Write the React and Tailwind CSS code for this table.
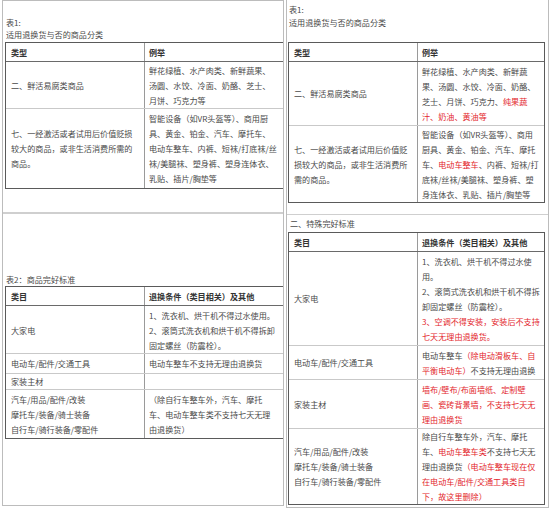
import React from "react";

const R = ({ children }) => <span className="text-[#e3262c]">{children}</span>;

function Lines({ lines }) {
  return (
    <>
      {lines.map((l, i) => (
        <div key={i} className="whitespace-nowrap">
          {l}
        </div>
      ))}
    </>
  );
}

function Row({ a, b, col1, head, first, afterHead, pad = "py-[1.5px]", aTop = false }) {
  const border = first ? "" : afterHead ? "border-t border-[#6a6a6a]" : "border-t border-[#c9c9c9]";
  const weight = head ? "font-bold text-[#333]" : "";
  return (
    <div className={`flex ${border}`}>
      <div
        className={`${col1} shrink-0 border-r border-[#9a9a9a] pl-[5px] ${pad} flex flex-col ${aTop ? "justify-start" : "justify-center"} overflow-hidden ${weight}`}
      >
        <Lines lines={a} />
      </div>
      <div className={`flex-1 pl-[4px] ${pad} overflow-hidden ${weight}`}>
        <Lines lines={b} />
      </div>
    </div>
  );
}

export default function App() {
  return (
    <div className="w-[549px] h-[508px] bg-white flex overflow-hidden text-[#4a4a4a] text-[8.1px] leading-[15px] font-['Noto_Sans_CJK_SC','Noto_Sans',sans-serif]">
      {/* LEFT PANEL */}
      <div className="ml-[2px] w-[282px] h-[506px] shrink-0 border border-[#bcbcbc] flex flex-col overflow-hidden">
        <div className="h-[213px] shrink-0 border-b-2 border-[#cfcfcf] pt-[16px] overflow-hidden">
          <div className="pl-[3px] leading-[12px]">
            <div>表1:</div>
            <div>适用退换货与否的商品分类</div>
          </div>
          <div className="ml-[2px] mt-[1px] w-[300px] border border-[#5a5a5a]">
            <Row first head col1="w-[139px]" a={["类型"]} b={["例举"]} />
            <Row
              afterHead
              col1="w-[139px]"
              a={["二、鲜活易腐类商品"]}
              b={["鲜花绿植、水产肉类、新鲜蔬果、", "汤圆、水饺、冷面、奶酪、芝士、", "月饼、巧克力等"]}
              pad="pt-[1px] pb-[0px]"
            />
            <Row
              col1="w-[139px]"
              a={["七、一经激活或者试用后价值贬损", "较大的商品，或非生活消费所需的", "商品。"]}
              b={[
                "智能设备（如VR头盔等）、商用厨",
                "具、黄金、铂金、汽车、摩托车、",
                "电动车整车、内裤、短袜/打底袜/丝",
                "袜/美腿袜、塑身裤、塑身连体衣、",
                "乳贴、插片/胸垫等",
              ]}
              pad="py-[2px]"
            />
          </div>
        </div>
        <div className="flex-1 pt-[60px] overflow-hidden">
          <div className="pl-[3px] leading-[12px]">表2：商品完好标准</div>
          <div className="ml-[2px] w-[300px] border border-[#5a5a5a]">
            <Row first head col1="w-[139px]" a={["类目"]} b={["退换条件（类目相关）及其他"]} />
            <Row
              afterHead
              col1="w-[139px]"
              a={["大家电"]}
              b={["1、洗衣机、烘干机不得过水使用。", "2、滚筒式洗衣机和烘干机不得拆卸", "固定螺丝（防震栓）。"]}
              pad="pt-[1.5px] pb-[0.5px]"
            />
            <Row col1="w-[139px]" a={["电动车/配件/交通工具"]} b={["电动车整车不支持无理由退换货"]} pad="py-[2px]" />
            <Row col1="w-[139px]" a={["家装主材"]} b={[""]} pad="py-[0px]" />
            <Row
              col1="w-[139px]"
              aTop
              a={["汽车/用品/配件/改装", "摩托车/装备/骑士装备", "自行车/骑行装备/零配件"]}
              b={["（除自行车整车外，汽车、摩托", "车、电动车整车类不支持七天无理", "由退换货）"]}
              pad="pt-[2px] pb-[1px]"
            />
          </div>
        </div>
      </div>

      {/* RIGHT PANEL */}
      <div className="ml-[2px] w-[263px] h-[508px] shrink-0 border-l border-r border-b border-[#bcbcbc] flex flex-col overflow-hidden">
        <div className="h-[215px] shrink-0 border-b border-[#cfcfcf] pt-[3px]">
          <div className="pl-[2px] leading-[13px]">
            <div>表1:</div>
            <div>适用退换货与否的商品分类</div>
          </div>
          <div className="ml-[1px] mt-[13px] w-[257px] border border-[#5a5a5a]">
            <Row first head col1="w-[129px]" a={["类型"]} b={["例举"]} />
            <Row
              afterHead
              col1="w-[129px]"
              a={["二、鲜活易腐类商品"]}
              b={[
                "鲜花绿植、水产肉类、新鲜蔬",
                "果、汤圆、水饺、冷面、奶酪、",
                <>
                  芝士、月饼、巧克力、<R>纯果蔬</R>
                </>,
                <R>汁、奶油、黄油等</R>,
              ]}
            />
            <Row
              col1="w-[129px]"
              a={["七、一经激活或者试用后价值贬", "损较大的商品，或非生活消费所", "需的商品。"]}
              b={[
                "智能设备（如VR头盔等）、商用",
                "厨具、黄金、铂金、汽车、摩托",
                <>
                  车、<R>电动车整车</R>、内裤、短袜/打
                </>,
                "底袜/丝袜/美腿袜、塑身裤、塑",
                "身连体衣、乳贴、插片/胸垫等",
              ]}
              pad="py-[0.5px]"
            />
          </div>
        </div>
        <div className="flex-1 pt-[2px]">
          <div className="pl-[3px] leading-[14px] mb-[1px]">二、特殊完好标准</div>
          <div className="ml-[1px] w-[257px] border border-[#5a5a5a]">
            <Row first head col1="w-[129px]" a={["类目"]} b={["退换条件（类目相关）及其他"]} />
            <Row
              afterHead
              col1="w-[129px]"
              a={["大家电"]}
              b={[
                "1、洗衣机、烘干机不得过水使",
                "用。",
                "2、滚筒式洗衣机和烘干机不得拆",
                "卸固定螺丝（防震栓）。",
                <R>3、空调不得安装，安装后不支持</R>,
                <R>七天无理由退换货。</R>,
              ]}
            />
            <Row
              col1="w-[129px]"
              a={["电动车/配件/交通工具"]}
              b={[
                <>
                  电动车整车<R>（除电动滑板车、自</R>
                </>,
                <>
                  <R>平衡电动车）</R>不支持无理由退换
                </>,
              ]}
            />
            <Row
              col1="w-[129px]"
              a={["家装主材"]}
              b={[
                <R>墙布/壁布/布面墙纸、定制壁</R>,
                <R>画、瓷砖背景墙，不支持七天无</R>,
                <R>理由退换货</R>,
              ]}
            />
            <Row
              col1="w-[129px]"
              a={["汽车/用品/配件/改装", "摩托车/装备/骑士装备", "自行车/骑行装备/零配件"]}
              b={[
                "除自行车整车外，汽车、摩托",
                <>
                  车、<R>电动车整车类</R>不支持七天无
                </>,
                <>
                  理由退换货<R>（电动车整车现在仅</R>
                </>,
                <R>在电动车/配件/交通工具类目</R>,
                <R>下，故这里删除）</R>,
              ]}
              pad="py-[0px]"
            />
          </div>
        </div>
      </div>
    </div>
  );
}
